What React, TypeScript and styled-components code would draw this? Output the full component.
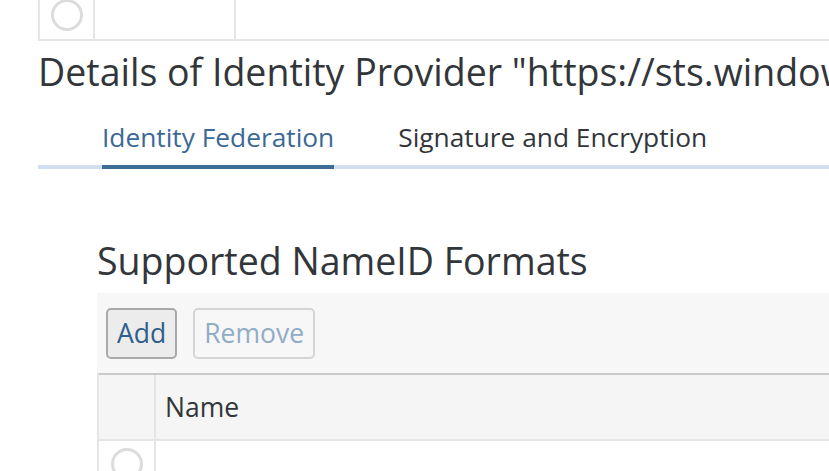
import React from 'react';
import styled, {createGlobalStyle} from "styled-components";

const GlobalStyle = createGlobalStyle`
  html, body {
    margin: 0;
    padding: 0;
    background: #ffffff;
    overflow: hidden;
  }
  body {
    font-family: "Open Sans", "Noto Sans", sans-serif;
    color: #32363a;
  }
`

const tabs = ['Identity Federation', 'Signature and Encryption']

const Radio = () => (
    <RadioCircle viewBox="0 0 32 32">
        <circle cx="16" cy="16" r="14.5" fill="none" stroke="#dcdcdc" strokeWidth="3"/>
    </RadioCircle>
)

export default function App() {
    return (
        <Page>
            <GlobalStyle/>
            <TopTable>
                <Cell width={53}><Radio/></Cell>
                <Cell width={139}/>
                <Cell grow/>
            </TopTable>
            <PageTitle>Details of Identity Provider "https://sts.windows.net/</PageTitle>
            <TabBar>
                {tabs.map((t, i) => (
                    <Tab key={t} active={i === 0}>{t}</Tab>
                ))}
            </TabBar>
            <Section>
                <SectionTitle>Supported NameID Formats</SectionTitle>
                <Toolbar>
                    <Button>Add</Button>
                    <Button disabled>Remove</Button>
                </Toolbar>
                <Table>
                    <HeaderRow>
                        <SelectCol/>
                        <HeaderCell>Name</HeaderCell>
                    </HeaderRow>
                    <BodyRow>
                        <SelectCol><Radio/></SelectCol>
                        <BodyCell/>
                    </BodyRow>
                </Table>
            </Section>
        </Page>
    );
}

const Page = styled.div`
  width: 829px;
  height: 471px;
  overflow: hidden;
`
const TopTable = styled.div`
  display: flex;
  width: 1200px;
  height: 49px;
  margin-top: -10px;
  margin-left: 38px;
  border-left: 2px solid #e5e5e5;
  border-bottom: 2px solid #e5e5e5;
`
const Cell = styled.div<{ width?: number; grow?: boolean }>`
  display: flex;
  align-items: center;
  justify-content: center;
  width: ${p => p.width ? `${p.width}px` : 'auto'};
  flex: ${p => p.grow ? 1 : 'none'};
  border-right: 2px solid #e5e5e5;
`
const RadioCircle = styled.svg`
  width: 32px;
  height: 32px;
  display: block;
`
const PageTitle = styled.h1`
  margin: 7px 0 0 38px;
  font-size: 37.5px;
  font-weight: 400;
  line-height: 48px;
  white-space: nowrap;
  color: #32363a;
`
const TabBar = styled.div`
  display: flex;
  gap: 64px;
  margin: 21px 0 0 38px;
  padding-left: 64px;
  border-bottom: 4px solid #d1dfee;
  width: 1200px;
`
const Tab = styled.div<{ active?: boolean }>`
  font-size: 26.3px;
  line-height: 40px;
  padding-bottom: 8px;
  margin-bottom: -4px;
  white-space: nowrap;
  color: ${p => p.active ? '#3a6996' : '#32363a'};
  border-bottom: 4px solid ${p => p.active ? '#3d6c97' : 'transparent'};
`
const Section = styled.section`
  margin: 64px 0 0 97px;
  width: 1000px;
`
const SectionTitle = styled.h2`
  margin: 0;
  font-size: 37.5px;
  font-weight: 400;
  line-height: 56px;
  white-space: nowrap;
  color: #32363a;
`
const Toolbar = styled.div`
  display: flex;
  align-items: center;
  gap: 16px;
  height: 80px;
  padding: 0 9px;
  margin-top: 4px;
  background: #f7f7f7;
`
const Button = styled.button`
  height: 51px;
  padding: 0 9px;
  font-family: inherit;
  font-size: 26.5px;
  border-radius: 5px;
  border: 2px solid #a9a9a9;
  background: #ececec;
  color: #2f5f8c;

  &:disabled {
    border-color: #d5d5d5;
    background: transparent;
    color: #91acc6;
  }
`
const Table = styled.div`
  border-left: 2px solid #e5e5e5;
`
const HeaderRow = styled.div`
  display: flex;
  height: 64px;
  background: #f5f5f5;
  border-top: 2px solid #c9c9c9;
  border-bottom: 2px solid #e5e5e5;
`
const BodyRow = styled.div`
  display: flex;
  height: 48px;
  background: #ffffff;
`
const SelectCol = styled.div`
  display: flex;
  align-items: flex-start;
  justify-content: center;
  width: 57px;
  padding-top: 7px;
  box-sizing: border-box;
  border-right: 2px solid #e5e5e5;
`
const HeaderCell = styled.div`
  display: flex;
  align-items: center;
  padding-left: 9px;
  font-size: 26.5px;
  color: #32363a;
`
const BodyCell = styled.div`
  flex: 1;
`
